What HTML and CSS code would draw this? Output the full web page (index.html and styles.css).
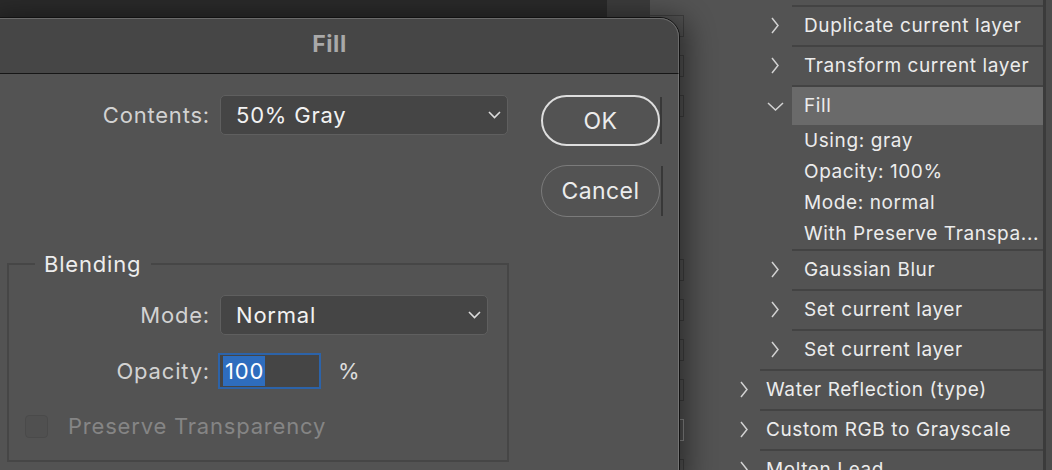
FILE: index.html
```html
<!DOCTYPE html>
<html>
<head>
<meta charset="utf-8">
<link rel="stylesheet" href="styles.css">
</head>
<body>
<div class="screen">
  <div class="doc"></div>
  <div class="gutter"></div>
  <div class="actions">
    <div class="row nested">
      <div class="toggle"><span></span></div><div class="indent"></div>
      <div class="chev"><svg width="8" height="17" viewBox="0 0 8 17"><path d="M1 1 L7 8.5 L1 16" /></svg></div>
      <div class="cell">Duplicate current layer</div>
    </div>
    <div class="row nested">
      <div class="toggle"><span></span></div><div class="indent"></div>
      <div class="chev"><svg width="8" height="17" viewBox="0 0 8 17"><path d="M1 1 L7 8.5 L1 16" /></svg></div>
      <div class="cell">Transform current layer</div>
    </div>
    <div class="row nested open">
      <div class="toggle"><span></span></div><div class="indent"></div>
      <div class="chev down"><svg width="17" height="9" viewBox="0 0 17 9"><path d="M1 1 L8.5 8 L16 1" /></svg></div>
      <div class="cell">Fill</div>
    </div>
    <div class="sub">Using: gray</div>
    <div class="sub">Opacity: 100%</div>
    <div class="sub">Mode: normal</div>
    <div class="sub">With Preserve Transpa...</div>
    <div class="row nested">
      <div class="toggle"><span></span></div><div class="indent"></div>
      <div class="chev"><svg width="8" height="17" viewBox="0 0 8 17"><path d="M1 1 L7 8.5 L1 16" /></svg></div>
      <div class="cell">Gaussian Blur</div>
    </div>
    <div class="row nested">
      <div class="toggle"><span></span></div><div class="indent"></div>
      <div class="chev"><svg width="8" height="17" viewBox="0 0 8 17"><path d="M1 1 L7 8.5 L1 16" /></svg></div>
      <div class="cell">Set current layer</div>
    </div>
    <div class="row nested">
      <div class="toggle"><span></span></div><div class="indent"></div>
      <div class="chev"><svg width="8" height="17" viewBox="0 0 8 17"><path d="M1 1 L7 8.5 L1 16" /></svg></div>
      <div class="cell">Set current layer</div>
    </div>
    <div class="row top">
      <div class="toggle"><span></span></div><div class="indent"></div>
      <div class="chev"><svg width="8" height="17" viewBox="0 0 8 17"><path d="M1 1 L7 8.5 L1 16" /></svg></div>
      <div class="cell">Water Reflection (type)</div>
    </div>
    <div class="row top">
      <div class="toggle"><span class="lit"></span></div><div class="indent"></div>
      <div class="chev"><svg width="8" height="17" viewBox="0 0 8 17"><path d="M1 1 L7 8.5 L1 16" /></svg></div>
      <div class="cell">Custom RGB to Grayscale</div>
    </div>
    <div class="row top">
      <div class="toggle"><span></span></div><div class="indent"></div>
      <div class="chev"><svg width="8" height="17" viewBox="0 0 8 17"><path d="M1 1 L7 8.5 L1 16" /></svg></div>
      <div class="cell">Molten Lead</div>
    </div>
  </div>
  <div class="scroll"></div>

  <div class="dialog">
    <div class="titlebar">Fill</div>
    <div class="dialog-body">
      <div class="top-row">
        <div class="form-row contents-row">
          <span class="lbl">Contents:</span>
          <div class="select wide"><span>50% Gray</span><svg width="13" height="8" viewBox="0 0 13 8"><path d="M1 1 L6.5 6.5 L12 1" /></svg></div>
        </div>
        <div class="buttons">
          <button class="btn default">OK</button>
          <button class="btn">Cancel</button>
        </div>
      </div>
      <fieldset class="blending">
        <legend>Blending</legend>
        <div class="form-row mode-row">
          <span class="lbl">Mode:</span>
          <div class="select narrow"><span>Normal</span><svg width="13" height="8" viewBox="0 0 13 8"><path d="M1 1 L6.5 6.5 L12 1" /></svg></div>
        </div>
        <div class="form-row opacity-row">
          <span class="lbl">Opacity:</span>
          <div class="ctrl">
            <div class="num"><span class="sel">100</span></div>
            <span class="pct">%</span>
          </div>
        </div>
        <div class="check-row">
          <span class="box"></span>
          <span class="check-label">Preserve Transparency</span>
        </div>
      </fieldset>
    </div>
  </div>
</div>
</body>
</html>
```

FILE: styles.css
```css
* { box-sizing: border-box; }
html, body { margin: 0; padding: 0; }
body {
  background: #535353;
  font-family: Inter, "Noto Sans", "Liberation Sans", sans-serif;
  overflow: hidden;
}
.screen {
  position: relative;
  width: 1052px;
  height: 470px;
  display: flex;
  overflow: hidden;
}
.doc { width: 607px; flex: none; background: #2a2a2a; }
.gutter { width: 43px; flex: none; background: #3c3c3c; }
.actions {
  flex: 1;
  background: #535353;
  padding-top: 5px;
  color: #ececec;
  font-size: 19px;
  letter-spacing: 0.6px;
}
.scroll {
  width: 9px;
  flex: none;
  background: #4c4c4c;
  border-left: 3px solid #3b3b3b;
}

.row { display: flex; height: 40px; }
.toggle { width: 35px; flex: none; padding-top: 10px; }
.toggle span { display: block; width: 34px; height: 22px; border: 1px solid #3f3f3f; border-left: none; }
.toggle span.lit { border-color: #8a8a8a; }
.row.top .indent { width: 43px; flex: none; }
.row.nested .indent { width: 75px; flex: none; }
.chev {
  width: 32px; flex: none;
  display: flex; align-items: center;
  padding-left: 11px;
  padding-top: 1px;
}
.row.top .chev { padding-left: 12px; }
.chev.down { padding-left: 7px; padding-top: 3px; }
.chev svg path { fill: none; stroke: #d2d2d2; stroke-width: 1.5; }
.cell {
  flex: 1;
  border-top: 2px solid #434343;
  display: flex; align-items: center;
  padding-left: 12px;
  padding-bottom: 2px;
  white-space: nowrap;
  overflow: hidden;
}
.row.top .cell { padding-left: 6px; }
.row.open .cell { background: #6a6a6a; }
.sub {
  height: 31px;
  padding-left: 154px;
  display: flex; align-items: center;
  white-space: nowrap;
}
.sub:last-of-type { letter-spacing: 0.4px; }

/* dialog window */
.dialog {
  position: absolute;
  left: -21px;
  top: 17px;
  width: 701px;
  height: 470px;
  background: #535353;
  border: 1px solid #121212;
  border-radius: 20px 20px 0 0;
  box-shadow: 8px 0 28px rgba(0,0,0,0.45);
}
.dialog::after {
  content: "";
  position: absolute;
  inset: 0;
  border: 1px solid rgba(255,255,255,0.2);
  border-radius: 19px 19px 0 0;
  pointer-events: none;
}
.titlebar {
  height: 56px;
  background: #464646;
  border-bottom: 1px solid #161616;
  border-radius: 19px 19px 0 0;
  display: flex; align-items: center; justify-content: center;
  padding-bottom: 3px;
  color: #a9a9a9;
  font-weight: 700;
  font-size: 23px;
  letter-spacing: 0.6px;
}
.dialog-body { padding-top: 21px; font-size: 22px; color: #d4d4d4; letter-spacing: 0.8px; }
.top-row { display: flex; align-items: flex-start; }
.form-row {
  display: grid;
  grid-template-columns: 229px auto;
  column-gap: 11px;
  align-items: center;
}
.lbl { text-align: right; color: #d2d2d2; margin-right: -1px; }
.select {
  height: 40px;
  background: #454545;
  border: 1px solid #5f5f5f;
  border-radius: 5px;
  display: flex; align-items: center; justify-content: space-between;
  padding: 0 6px 0 15px;
  color: #f2f2f2;
}
.select svg path { fill: none; stroke: #dcdcdc; stroke-width: 1.6; }
.select.wide { width: 288px; }
.select.narrow { width: 268px; }
.buttons {
  margin-left: 33px;
  display: flex; flex-direction: column;
  gap: 19px;
}
.btn {
  position: relative;
  width: 119px; height: 52px;
  border-radius: 26px;
  background: transparent;
  border: 1.5px solid #7b7b7b;
  color: #ececec;
  font-family: inherit;
  font-size: 23px;
  letter-spacing: 0.4px;
  padding: 0;
}
.btn.default { border: 2px solid #dedede; height: 51px; }
.btn::after {
  content: "";
  position: absolute;
  right: -4px; top: 0; bottom: 0;
  width: 2px;
  background: #383838;
}

.blending {
  margin: 34px 0 0 27px;
  width: 502px;
  border: 2px solid #464646;
  padding: 18px 0 21px 0;
  min-width: 0;
}
.blending legend {
  margin-left: 26px;
  padding: 0 10px 0 9px;
  line-height: 26px;
  color: #ededed;
}
.blending .form-row { grid-template-columns: 200px auto; }
.opacity-row { margin-top: 18px; }
.ctrl { display: flex; align-items: center; }
.num {
  margin-left: -2px;
  width: 103px; height: 36px;
  border: 2px solid #2c63a9;
  background: #454545;
  padding: 1px 0 1px 3px;
  display: flex;
}
.num .sel {
  background: #2e6dbe;
  color: #ffffff;
  padding: 0 1px 0 2px;
  line-height: 30px;
}
.pct { margin-left: 17px; color: #dcdcdc; }
.check-row {
  margin-top: 24px;
  padding-left: 16px;
  display: flex; align-items: center;
}
.box {
  width: 23px; height: 23px;
  border: 1px solid #4a4a4a;
  background: #505050;
  border-radius: 4px;
}
.check-label { margin-left: 20px; color: #858585; }
```
